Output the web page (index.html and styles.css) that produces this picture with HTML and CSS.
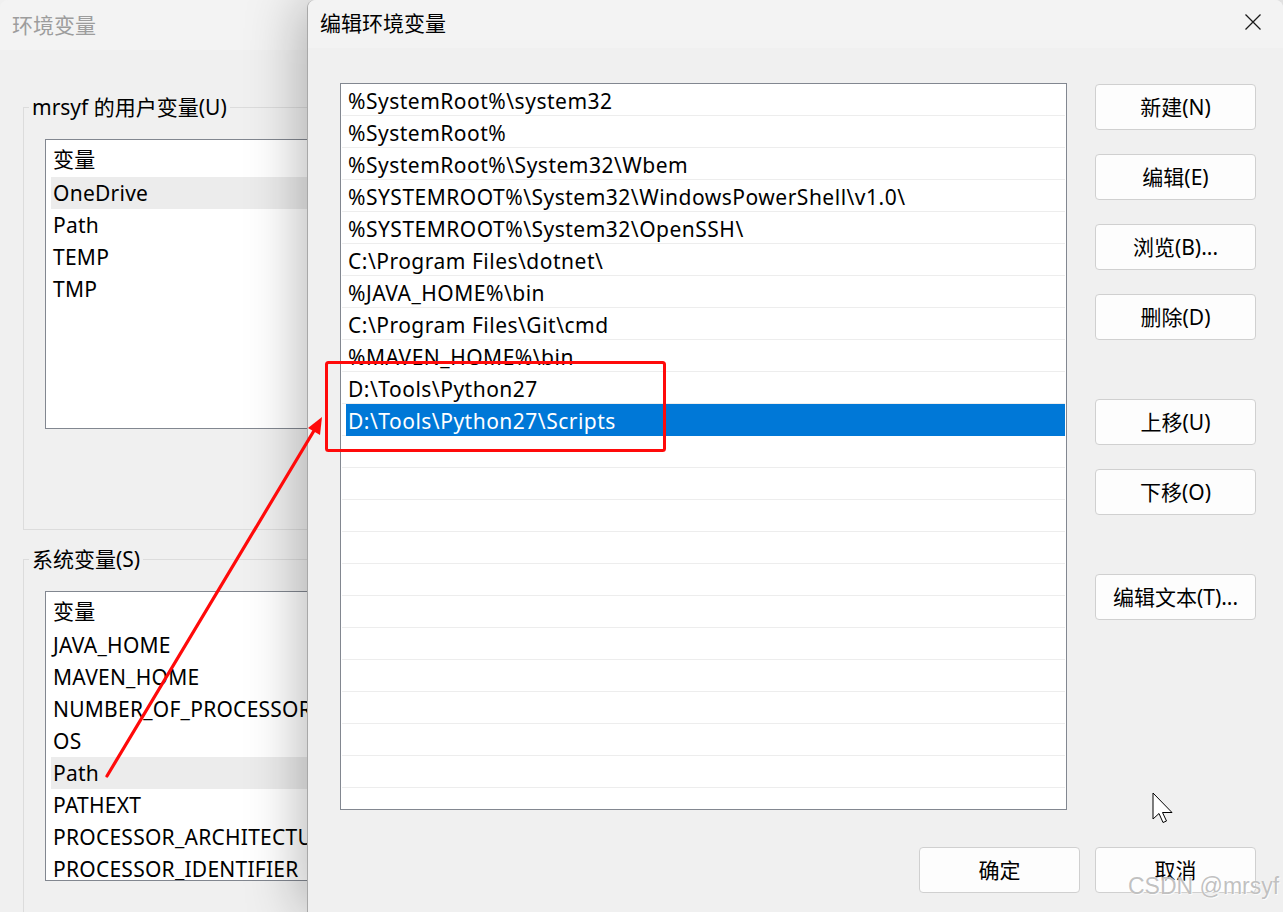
FILE: index.html
```html
<!DOCTYPE html>
<html lang="zh-CN">
<head>
<meta charset="utf-8">
<title>编辑环境变量</title>
<link rel="stylesheet" href="styles.css">
</head>
<body>
<div class="desktop">
  <div class="back-window">
    <div class="back-title">环境变量</div>
    <div class="back-body">
      <div class="group group-user">
        <div class="legend">mrsyf 的用户变量(U)</div>
        <div class="var-list">
          <div class="var-head">变量</div>
          <div class="var-row sel">OneDrive</div>
          <div class="var-row">Path</div>
          <div class="var-row">TEMP</div>
          <div class="var-row">TMP</div>
        </div>
      </div>
      <div class="group group-sys">
        <div class="legend">系统变量(S)</div>
        <div class="var-list">
          <div class="var-head">变量</div>
          <div class="var-row">JAVA_HOME</div>
          <div class="var-row">MAVEN_HOME</div>
          <div class="var-row">NUMBER_OF_PROCESSORS</div>
          <div class="var-row">OS</div>
          <div class="var-row sel">Path</div>
          <div class="var-row">PATHEXT</div>
          <div class="var-row">PROCESSOR_ARCHITECTURE</div>
          <div class="var-row">PROCESSOR_IDENTIFIER</div>
        </div>
      </div>
    </div>
  </div>

  <div class="dialog">
    <div class="dlg-title">
      <span class="dlg-title-text">编辑环境变量</span>
      <svg class="close" width="16" height="16" viewBox="0 0 16 16"><path d="M0.5 0.5 L15.5 15.5 M15.5 0.5 L0.5 15.5" stroke="#1a1a1a" stroke-width="1.3" fill="none"/></svg>
    </div>
    <div class="dlg-body">
      <div class="dlg-main">
        <div class="path-list">
          <div class="prow"><span class="cell">%SystemRoot%\system32</span></div>
          <div class="prow"><span class="cell">%SystemRoot%</span></div>
          <div class="prow"><span class="cell">%SystemRoot%\System32\Wbem</span></div>
          <div class="prow"><span class="cell">%SYSTEMROOT%\System32\WindowsPowerShell\v1.0\</span></div>
          <div class="prow"><span class="cell">%SYSTEMROOT%\System32\OpenSSH\</span></div>
          <div class="prow"><span class="cell">C:\Program Files\dotnet\</span></div>
          <div class="prow"><span class="cell">%JAVA_HOME%\bin</span></div>
          <div class="prow"><span class="cell">C:\Program Files\Git\cmd</span></div>
          <div class="prow"><span class="cell">%MAVEN_HOME%\bin</span></div>
          <div class="prow"><span class="cell">D:\Tools\Python27</span></div>
          <div class="prow"><span class="cell selected">D:\Tools\Python27\Scripts</span></div>
          <div class="prow"><span class="cell"></span></div>
          <div class="prow"><span class="cell"></span></div>
          <div class="prow"><span class="cell"></span></div>
          <div class="prow"><span class="cell"></span></div>
          <div class="prow"><span class="cell"></span></div>
          <div class="prow"><span class="cell"></span></div>
          <div class="prow"><span class="cell"></span></div>
          <div class="prow"><span class="cell"></span></div>
          <div class="prow"><span class="cell"></span></div>
          <div class="prow"><span class="cell"></span></div>
          <div class="prow"><span class="cell"></span></div>
          <div class="prow"><span class="cell"></span></div>
        </div>
        <div class="side-buttons">
          <button class="btn">新建(N)</button>
          <button class="btn gap-s">编辑(E)</button>
          <button class="btn gap-s">浏览(B)...</button>
          <button class="btn gap-s">删除(D)</button>
          <button class="btn gap-l">上移(U)</button>
          <button class="btn gap-s">下移(O)</button>
          <button class="btn gap-l">编辑文本(T)...</button>
        </div>
      </div>
      <div class="dlg-footer">
        <button class="btn btn-foot">确定</button>
        <button class="btn btn-foot">取消</button>
      </div>
    </div>
  </div>

  <svg class="annot" width="1283" height="912" viewBox="0 0 1283 912">
    <rect x="326.5" y="362.5" width="338" height="88" rx="2" fill="none" stroke="#ff0a0a" stroke-width="3"/>
    <line x1="107" y1="776" x2="315" y2="429" stroke="#ff0a0a" stroke-width="3.2" stroke-linecap="round"/>
    <polygon points="322,417 308,428 320,435" fill="#ff0a0a"/>
  </svg>

  <svg class="cursor" width="22" height="32" viewBox="0 0 22 32">
    <path d="M1 1 L1 27 L7 21.5 L11 30.5 L14.5 29 L10.5 20.5 L20 20.5 Z" fill="#fff" stroke="#000" stroke-width="1" stroke-linejoin="round"/>
  </svg>

  <div class="watermark">CSDN @mrsyf</div>
</div>
</body>
</html>
```

FILE: styles.css
```css
* { box-sizing: border-box; }
html, body { margin: 0; padding: 0; }
body {
  width: 1283px;
  height: 912px;
  overflow: hidden;
  background: #f0f0f0;
  font-family: "Noto Sans", "Noto Sans CJK SC", sans-serif;
  font-size: 21px;
  color: #000;
}
.desktop {
  position: relative;
  width: 1283px;
  height: 912px;
  overflow: hidden;
}

/* background window */
.back-window {
  width: 760px;
  height: 912px;
  background: #f0f0f0;
  border-top-left-radius: 8px;
  overflow: hidden;
}
.back-title {
  height: 50px;
  background: #f3f3f3;
  display: flex;
  align-items: center;
  padding: 0 0 2px 12px;
  color: #9d9d9d;
  font-size: 21px;
}
.back-body {
  padding: 57px 0 0 23px;
}
.group {
  width: 700px;
  border: 1px solid #dcdcdc;
}
.group-user { height: 423px; }
.group-sys { margin-top: 29px; height: 420px; }
.legend {
  width: fit-content;
  height: 28px;
  line-height: 28px;
  margin: -15px 0 0 5px;
  padding: 0 3px;
  background: #f0f0f0;
}
.var-list {
  width: 640px;
  height: 290px;
  margin: 18px 0 0 21px;
  border: 1px solid #828790;
  background: #fff;
  padding-top: 3px;
  overflow: hidden;
  letter-spacing: 0.25px;
}
.var-head {
  height: 32px;
  line-height: 32px;
  padding-left: 7px;
  margin-bottom: 2px;
}
.var-row {
  height: 32px;
  line-height: 32px;
  margin-left: 5px;
  padding-left: 2px;
  white-space: nowrap;
}
.var-row.sel { background: #ececec; }

/* front dialog */
.dialog {
  position: absolute;
  left: 307px;
  top: 0;
  width: 976px;
  height: 912px;
  background: #f0f0f0;
  border-left: 1px solid #a8a8a8;
  border-top-left-radius: 8px;
  border-top-right-radius: 8px;
  box-shadow: -6px 0 55px rgba(0, 0, 0, 0.28);
}
.dlg-title {
  height: 48px;
  background: #f3f3f3;
  border-top-left-radius: 8px;
  border-top-right-radius: 8px;
  display: flex;
  align-items: center;
  justify-content: space-between;
  padding: 0 22px 4px 12px;
}
.dlg-title-text { font-size: 21px; }
.close { display: block; }
.dlg-body {
  padding: 35px 27px 0 32px;
}
.dlg-main {
  display: flex;
  gap: 28px;
}
.path-list {
  width: 727px;
  height: 727px;
  background: #fff;
  border: 1px solid #828790;
  overflow: hidden;
  letter-spacing: 0.5px;
}
.prow {
  height: 32px;
  border-bottom: 1px solid #ededed;
  margin: 0 1px;
}
.cell {
  display: block;
  height: 31px;
  padding-top: 3px;
  line-height: 28px;
  margin-left: 4px;
  padding-left: 2px;
  white-space: nowrap;
}
.cell.selected {
  background: #0078d7;
  color: #fff;
  height: 32px;
}
.side-buttons {
  width: 161px;
  padding-top: 1px;
  display: flex;
  flex-direction: column;
}
.btn {
  width: 161px;
  height: 46px;
  background: #fdfdfd;
  border: 1px solid #d0d0d0;
  border-radius: 4px;
  font-family: "Noto Sans", "Noto Sans CJK SC", sans-serif;
  font-size: 21px;
  color: #000;
  padding: 0;
  line-height: 44px;
}
.gap-s { margin-top: 24px; }
.gap-l { margin-top: 59px; }
.dlg-footer {
  display: flex;
  justify-content: flex-end;
  gap: 15px;
  margin-top: 37px;
}
.btn-foot { width: 161px; }

/* overlays */
.annot {
  position: absolute;
  left: 0;
  top: 0;
  pointer-events: none;
}
.cursor {
  position: absolute;
  left: 1152px;
  top: 792px;
}
.watermark {
  position: absolute;
  left: 1128px;
  top: 873px;
  font-family: "Liberation Sans", Arial, sans-serif;
  font-size: 23px;
  color: rgba(140, 140, 140, 0.55);
  text-shadow: 0 0 1px #fff, 1px 1px 0 rgba(255,255,255,0.8);
  white-space: nowrap;
}
```
